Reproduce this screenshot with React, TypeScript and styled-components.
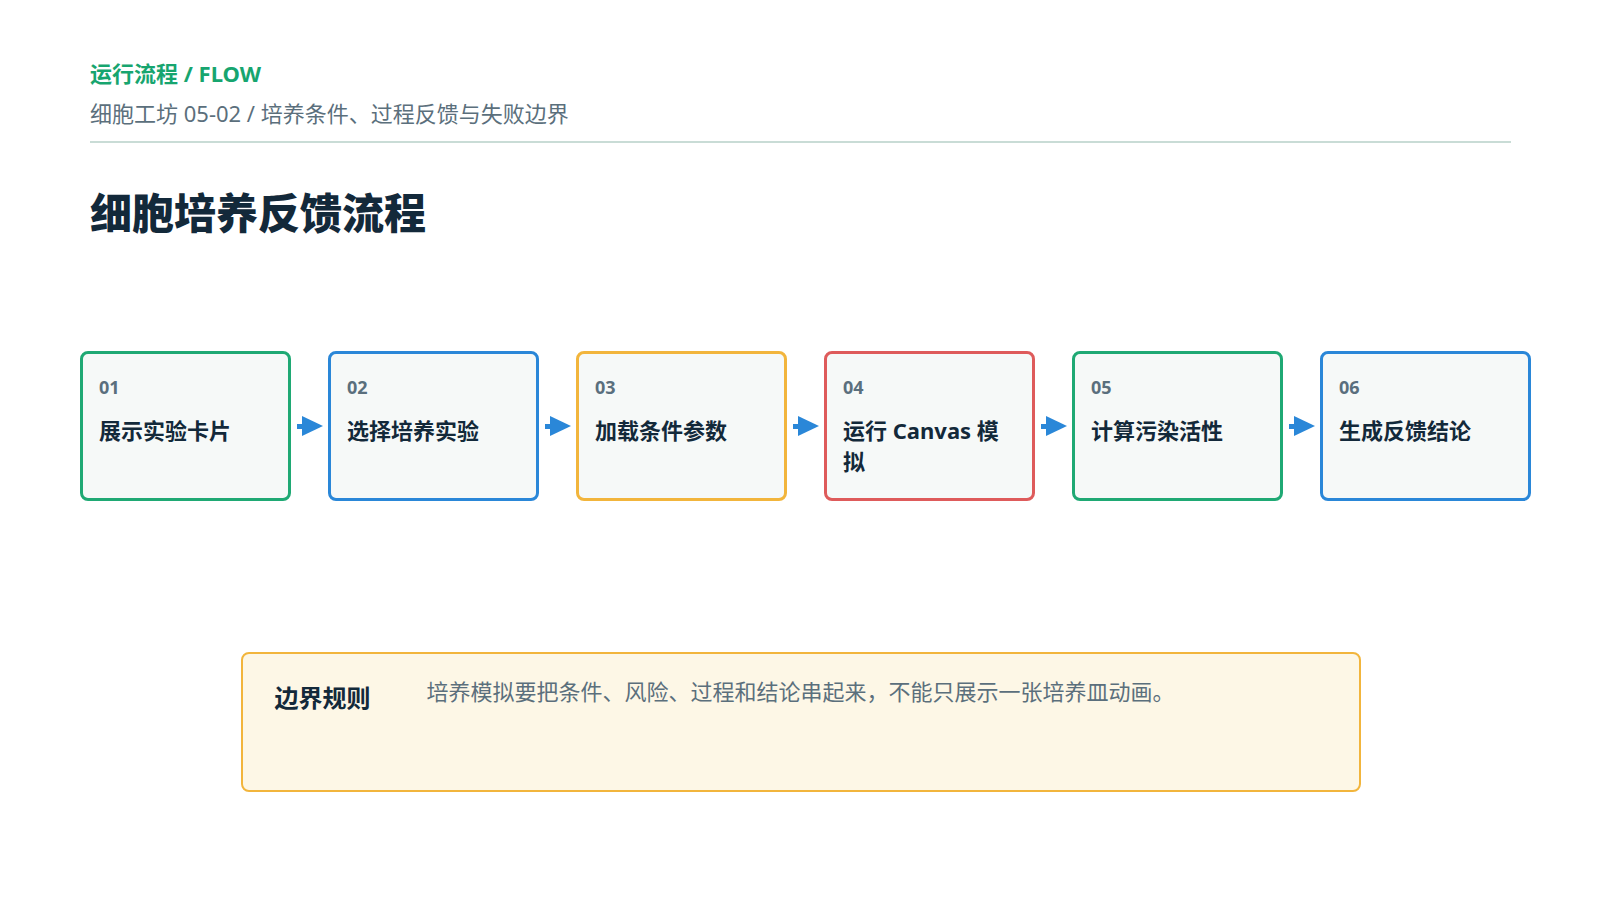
import React from "react";
import styled, { createGlobalStyle } from "styled-components";

const GlobalStyle = createGlobalStyle`
  html, body {
    margin: 0;
    padding: 0;
    background: #ffffff;
  }
  body {
    font-family: "Noto Sans", "Noto Sans CJK SC", sans-serif;
    color: #13293a;
  }
`;

type Step = {
  no: string;
  title: string;
  color: string;
};

const steps: Step[] = [
  { no: "01", title: "展示实验卡片", color: "#1fa974" },
  { no: "02", title: "选择培养实验", color: "#2a87d8" },
  { no: "03", title: "加载条件参数", color: "#f2b53c" },
  { no: "04", title: "运行 Canvas 模拟", color: "#de5b5b" },
  { no: "05", title: "计算污染活性", color: "#1fa974" },
  { no: "06", title: "生成反馈结论", color: "#2a87d8" },
];

const App = () => {
  return (
    <Page>
      <GlobalStyle />
      <Header>
        <Eyebrow>运行流程 / FLOW</Eyebrow>
        <Subtitle>细胞工坊 05-02 / 培养条件、过程反馈与失败边界</Subtitle>
      </Header>

      <Title>细胞培养反馈流程</Title>

      <FlowRow>
        {steps.map((step, i) => (
          <React.Fragment key={step.no}>
            <StepCard $accent={step.color}>
              <StepNo>{step.no}</StepNo>
              <StepTitle>{step.title}</StepTitle>
            </StepCard>
            {i < steps.length - 1 && (
              <Connector>
                <svg width="26" height="20" viewBox="0 0 26 20">
                  <rect x="0" y="8" width="12" height="5" fill="#2a87d8" />
                  <polygon points="5,0 26,10 5,20" fill="#2a87d8" />
                </svg>
              </Connector>
            )}
          </React.Fragment>
        ))}
      </FlowRow>

      <RuleBox>
        <RuleLabel>边界规则</RuleLabel>
        <RuleText>
          培养模拟要把条件、风险、过程和结论串起来，不能只展示一张培养皿动画。
        </RuleText>
      </RuleBox>
    </Page>
  );
};

export default App;

const Page = styled.div`
  width: 1600px;
  height: 900px;
  box-sizing: border-box;
  padding: 58px 89px 0 90px;
  overflow: hidden;
`;

const Header = styled.header`
  display: flex;
  flex-direction: column;
  gap: 10px;
  padding-bottom: 13px;
  border-bottom: 2px solid #c9dcd6;
`;

const Eyebrow = styled.div`
  font-size: 22px;
  line-height: 30px;
  font-weight: 700;
  color: #17a56f;
`;

const Subtitle = styled.div`
  font-size: 22px;
  line-height: 30px;
  color: #5b6f7c;
`;

const Title = styled.h1`
  margin: 42px 0 0;
  font-size: 42px;
  line-height: 56px;
  font-weight: 800;
  color: #13293a;
`;

const FlowRow = styled.div`
  display: flex;
  align-items: center;
  width: 1451px;
  margin: 110px 0 0 -10px;
`;

const StepCard = styled.div<{ $accent: string }>`
  flex: 0 0 211px;
  height: 150px;
  box-sizing: border-box;
  padding: 21px 14px 0 16px;
  border: 3px solid ${(p) => p.$accent};
  border-radius: 8px;
  background: #f6f9f8;
`;

const StepNo = styled.div`
  font-size: 18px;
  line-height: 24px;
  font-weight: 700;
  color: #5a6f7d;
`;

const StepTitle = styled.div`
  margin-top: 16px;
  font-size: 22px;
  line-height: 31px;
  font-weight: 700;
  color: #13293a;
`;

const Connector = styled.div`
  flex: 0 0 37px;
  display: flex;
  align-items: center;
  justify-content: center;

  svg {
    display: block;
  }
`;

const RuleBox = styled.section`
  display: flex;
  align-items: flex-start;
  gap: 32px;
  width: 1120px;
  height: 140px;
  box-sizing: border-box;
  margin: 151px auto 0;
  padding: 20px 32px;
  border: 2px solid #f2b53c;
  border-radius: 8px;
  background: #fdf7e6;
`;

const RuleLabel = styled.div`
  flex: 0 0 120px;
  margin-top: 7px;
  font-size: 24px;
  line-height: 34px;
  font-weight: 700;
  color: #13293a;
`;

const RuleText = styled.div`
  font-size: 22px;
  line-height: 34px;
  color: #5b6f7c;
`;
